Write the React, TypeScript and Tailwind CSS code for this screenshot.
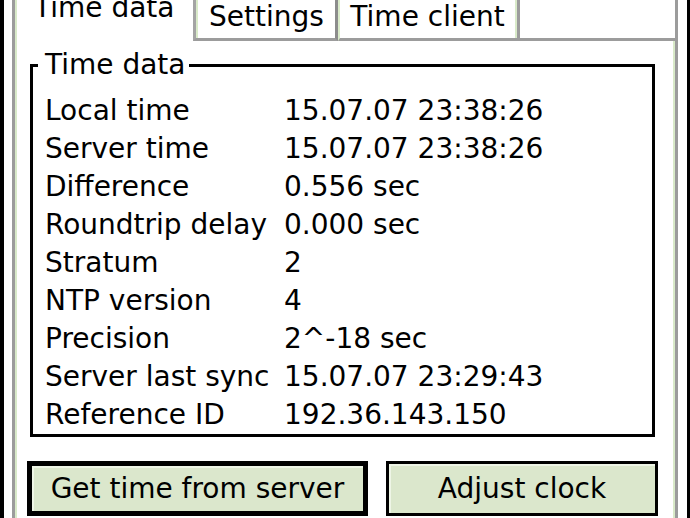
const rows: [string, string][] = [
  ['Local time', '15.07.07 23:38:26'],
  ['Server time', '15.07.07 23:38:26'],
  ['Difference', '0.556 sec'],
  ['Roundtrip delay', '0.000 sec'],
  ['Stratum', '2'],
  ['NTP version', '4'],
  ['Precision', '2^-18 sec'],
  ['Server last sync', '15.07.07 23:29:43'],
  ['Reference ID', '192.36.143.150'],
];

export default function App() {
  return (
    <div className="w-[690px] h-[518px] overflow-hidden bg-white flex text-black text-[28px] font-['DejaVu_Sans',sans-serif]">
      <div className="w-[4px] bg-black shrink-0" />
      <div className="w-[8px] shrink-0" />

      <div className="w-[666px] shrink-0 flex flex-col">
        {/* Tabs */}
        <div className="h-[41px] flex shrink-0">
          <div className="w-[181px] border-l-[3px] border-[#9c9c9c] shrink-0">
            <div className="h-full border-l-2 border-[#d9eac9] pl-[17px] overflow-hidden">
              <div className="-mt-[8px] leading-[32px] whitespace-nowrap">Time data</div>
            </div>
          </div>
          <div className="w-[145px] shrink-0 border-l-[3px] border-r-[3px] border-b-[3px] border-l-[#a4a4a4] border-r-[#8c8c8c] border-b-[#9c9c9c]">
            <div className="h-full border-l-2 border-[#d9eac9] flex justify-center pt-[1px] leading-[32px] whitespace-nowrap">Settings</div>
          </div>
          <div className="w-[182px] shrink-0 border-l-[2px] border-r-[3px] border-b-[3px] border-l-[#d9eac9] border-r-[#9c9c9c] border-b-[#9c9c9c]">
            <div className="h-full border-r-2 border-[#d9eac9] flex justify-center pt-[1px] leading-[32px] whitespace-nowrap">Time client</div>
          </div>
          <div className="flex-1 border-b-[3px] border-r-[3px] border-[#9c9c9c]" />
        </div>

        {/* Page */}
        <div className="flex-1 border-l-[3px] border-r-[3px] border-[#9c9c9c]">
          <div className="h-full border-l-2 border-r-2 border-[#d9eac9] flex flex-col">
            <fieldset className="mt-[9px] ml-[13px] mr-[18px] border-[3px] border-black pt-[12px] pb-0 pl-[12px] pr-0">
              <legend className="-ml-[7px] pl-[7px] pr-[3px] leading-[30px]">Time data</legend>
              <div className="grid grid-cols-[239px_1fr] leading-[38px] whitespace-nowrap">
                {rows.map(([k, v]) => (
                  <div key={k} className="contents">
                    <div>{k}</div>
                    <div>{v}</div>
                  </div>
                ))}
              </div>
            </fieldset>

            <div className="flex mt-[24px] ml-[10px] gap-[18px]">
              <button className="w-[341px] h-[55px] border-[5px] border-black bg-[#dbe7cc] shadow-[inset_2px_2px_0_#eef5e6] flex items-center justify-center whitespace-nowrap">
                Get time from server
              </button>
              <button className="w-[272px] h-[55px] border-[3px] border-black bg-[#dbe7cc] shadow-[inset_2px_2px_0_#eef5e6] flex items-center justify-center whitespace-nowrap">
                Adjust clock
              </button>
            </div>
          </div>
        </div>
      </div>

      <div className="w-[9px] shrink-0" />
      <div className="w-[3px] bg-black shrink-0" />
    </div>
  );
}
